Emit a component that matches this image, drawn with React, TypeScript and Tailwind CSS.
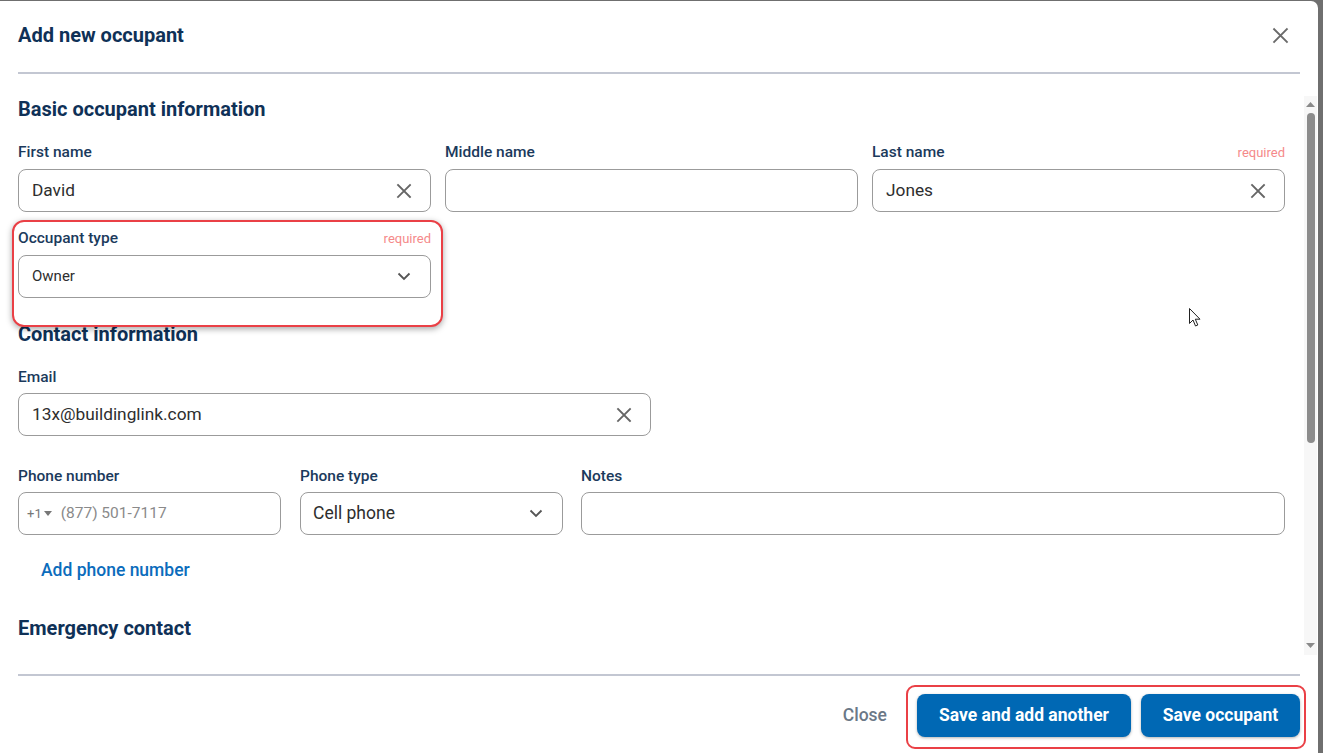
import React from "react";

const XIcon = ({ size = 16, color = "#666" }: { size?: number; color?: string }) => (
  <svg width={size} height={size} viewBox="0 0 16 16" fill="none">
    <path d="M2 2L14 14M14 2L2 14" stroke={color} strokeWidth="1.8" strokeLinecap="square" />
  </svg>
);

const Chevron = ({ color = "#555" }: { color?: string }) => (
  <svg width="14" height="9" viewBox="0 0 14 9" fill="none">
    <path d="M1.5 1.5L7 7L12.5 1.5" stroke={color} strokeWidth="1.8" />
  </svg>
);

const Label = ({ text, required }: { text: string; required?: boolean }) => (
  <div className="flex items-center justify-between h-[20px] pt-[2px]">
    <span className="text-[15.5px] font-medium text-[#1b3a5c]">{text}</span>
    {required && <span className="text-[13px] text-[#f58a8a]">required</span>}
  </div>
);

const TextInput = ({ value, clear }: { value?: string; clear?: boolean }) => (
  <div className="h-[43px] rounded-[8px] border border-[#9b9b9b] bg-white flex items-center justify-between pl-[13px] pr-[18px]">
    <span className="text-[17.3px] text-[#2e2e2e]">{value}</span>
    {clear && <XIcon />}
  </div>
);

export default function App() {
  return (
    <div className="w-[1323px] h-[753px] bg-[#6f6f6f] pt-px overflow-hidden font-['Roboto',sans-serif] relative">
      <div className="w-[1318px] h-[752px] bg-white rounded-tr-[7px] flex flex-col">
        {/* Header */}
        <div className="h-[71px] flex items-center justify-between pl-[18px] pr-[29px] pb-[3px]">
          <h1 className="text-[20px] font-bold text-[#0f3157]">Add new occupant</h1>
          <XIcon size={17} color="#6a6a6a" />
        </div>
        <div className="mx-[18px] h-[2px] bg-[#c3c7d2]" />

        {/* Scroll area */}
        <div className="h-[600px] flex overflow-hidden">
          <div className="w-[1285px] pl-[18px] flex flex-col">
            <h2 className="mt-[23px] h-[24px] leading-[24px] text-[20px] font-bold text-[#0f3157]">
              Basic occupant information
            </h2>
            <div className="mt-[21px] grid grid-cols-3 gap-x-[14px]">
              <div className="flex flex-col gap-[7px]">
                <Label text="First name" />
                <TextInput value="David" clear />
              </div>
              <div className="flex flex-col gap-[7px]">
                <Label text="Middle name" />
                <TextInput />
              </div>
              <div className="flex flex-col gap-[7px]">
                <Label text="Last name" required />
                <TextInput value="Jones" clear />
              </div>
            </div>

            {/* Occupant type with highlight */}
            <div className="mt-[16px] w-[413px] relative">
              <div className="absolute left-[-6px] top-[-8px] w-[431px] h-[107px] rounded-[12px] border-2 border-[#ea4046] bg-white shadow-[0_2px_6px_rgba(0,0,0,0.35)] z-10" />
              <div className="relative z-20 flex flex-col gap-[7px]">
                <Label text="Occupant type" required />
                <div className="h-[43px] rounded-[8px] border border-[#9b9b9b] bg-white flex items-center justify-between pl-[13px] pr-[19px]">
                  <span className="text-[15px] text-[#2e2e2e]">Owner</span>
                  <Chevron />
                </div>
              </div>
            </div>

            <h2 className="mt-[24px] h-[24px] leading-[24px] text-[20px] font-bold text-[#0f3157]">
              Contact information
            </h2>
            <div className="mt-[21px] w-[633px] flex flex-col gap-[6px]">
              <Label text="Email" />
              <TextInput value="13x@buildinglink.com" clear />
            </div>

            <div className="mt-[30px] flex">
              <div className="w-[263px] flex flex-col gap-[6px]">
                <Label text="Phone number" />
                <div className="h-[43px] rounded-[8px] border border-[#9b9b9b] bg-white flex items-center pl-[8px]">
                  <span className="text-[13px] text-[#777] flex items-center">
                    +1
                    <svg width="8" height="5" viewBox="0 0 8 5" className="ml-[2px]">
                      <path d="M0 0H8L4 5Z" fill="#777" />
                    </svg>
                  </span>
                  <span className="ml-[9px] text-[15.5px] text-[#8a8a8a]">(877) 501-7117</span>
                </div>
              </div>
              <div className="ml-[19px] w-[263px] flex flex-col gap-[6px]">
                <Label text="Phone type" />
                <div className="h-[43px] rounded-[8px] border border-[#9b9b9b] bg-white flex items-center justify-between pl-[12px] pr-[19px]">
                  <span className="text-[17.5px] text-[#2e2e2e]">Cell phone</span>
                  <Chevron />
                </div>
              </div>
              <div className="ml-[18px] w-[704px] flex flex-col gap-[6px]">
                <Label text="Notes" />
                <TextInput />
              </div>
            </div>

            <div className="mt-[23px] pl-[23px] h-[24px] leading-[24px] text-[17.5px] font-medium text-[#0b6cbc]">
              Add phone number
            </div>

            <h2 className="mt-[34px] h-[24px] leading-[24px] text-[20px] font-bold text-[#0f3157]">
              Emergency contact
            </h2>
          </div>

          {/* Scrollbar */}
          <div className="ml-[19px] mt-[22px] w-[13px] h-[559px] bg-[#f7f7f7] flex flex-col items-center">
            <svg width="9" height="5" viewBox="0 0 9 5" className="mt-[6px]">
              <path d="M0 5H9L4.5 0Z" fill="#8a8a8a" />
            </svg>
            <div className="mt-[6px] w-[8px] h-[330px] rounded-full bg-[#8c8c8c]" />
            <div className="flex-1" />
            <svg width="9" height="5" viewBox="0 0 9 5" className="mb-[7px]">
              <path d="M0 0H9L4.5 5Z" fill="#8a8a8a" />
            </svg>
          </div>
        </div>

        <div className="mx-[18px] h-[2px] bg-[#c3c7d2]" />

        {/* Footer */}
        <div className="flex-1 flex justify-end items-start pt-[18px] pr-[18px]">
          <div className="h-[43px] flex items-center mr-[30px] text-[17.5px] font-medium text-[#6b7887]">Close</div>
          <div className="relative flex gap-[10px]">
            <div className="absolute left-[-11px] top-[-9px] right-[-6px] bottom-[-12px] rounded-[9px] border-2 border-[#ea4046]" />
            <button className="relative h-[43px] w-[214px] rounded-[8px] bg-[#0068b4] text-white text-[17.5px] font-bold shadow-[0_1px_3px_rgba(0,0,0,0.3)]">
              Save and add another
            </button>
            <button className="relative h-[43px] w-[159px] rounded-[8px] bg-[#0068b4] text-white text-[17.5px] font-bold shadow-[0_1px_3px_rgba(0,0,0,0.3)]">
              Save occupant
            </button>
          </div>
        </div>
      </div>

      {/* Mouse cursor */}
      <svg className="absolute left-[1189px] top-[308px]" width="13" height="20" viewBox="0 0 13 20">
        <path d="M0.5 0.5V15.5L4 12L6.5 18L8.8 17L6.3 11.2H11L0.5 0.5Z" fill="white" stroke="#222" strokeWidth="1" strokeLinejoin="round" />
      </svg>
    </div>
  );
}
